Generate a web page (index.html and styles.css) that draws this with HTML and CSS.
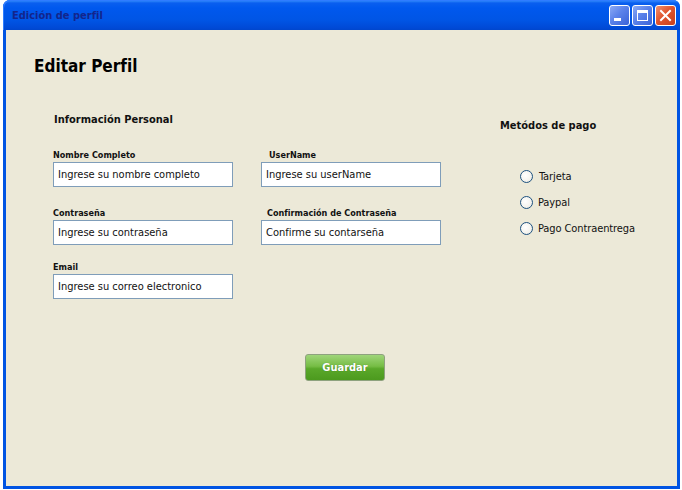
FILE: index.html
```html
<!DOCTYPE html>
<html lang="es">
<head>
<meta charset="utf-8">
<title>Edición de perfil</title>
<link rel="stylesheet" href="styles.css">
</head>
<body>
<div class="window">
  <div class="titlebar">
    <span class="title">Edición de perfil</span>
    <div class="controls">
      <span class="ctl ctl-min"><svg width="21" height="21" viewBox="0 0 21 21"><rect x="5" y="13" width="7" height="3" fill="#fff"/></svg></span>
      <span class="ctl ctl-max"><svg width="21" height="21" viewBox="0 0 21 21"><rect x="5.5" y="5.5" width="10" height="10" fill="none" stroke="#fff" stroke-width="1"/><rect x="5" y="5" width="11" height="3" fill="#fff"/></svg></span>
      <span class="ctl ctl-close"><svg width="21" height="21" viewBox="0 0 21 21"><path d="M6 6 L15 15 M15 6 L6 15" stroke="#fff" stroke-width="2" stroke-linecap="square"/></svg></span>
    </div>
  </div>
  <div class="content">
    <h1 class="page-title">Editar Perfil</h1>
    <div class="main">
      <section class="personal">
        <h2 class="section-title">Información Personal</h2>
        <div class="fields">
          <div class="field">
            <label class="label">Nombre Completo</label>
            <div class="input">Ingrese su nombre completo</div>
          </div>
          <div class="field">
            <label class="label label-right">UserName</label>
            <div class="input">Ingrese su userName</div>
          </div>
          <div class="field">
            <label class="label">Contraseña</label>
            <div class="input">Ingrese su contraseña</div>
          </div>
          <div class="field">
            <label class="label label-right2">Confirmación de Contraseña</label>
            <div class="input">Confirme su contarseña</div>
          </div>
          <div class="field field-tight">
            <label class="label">Email</label>
            <div class="input">Ingrese su correo electronico</div>
          </div>
        </div>
      </section>
      <section class="payment">
        <h2 class="section-title pay-title">Metódos de pago</h2>
        <div class="radios">
          <div class="radio-row"><span class="radio"></span><span class="radio-label r1">Tarjeta</span></div>
          <div class="radio-row"><span class="radio"></span><span class="radio-label">Paypal</span></div>
          <div class="radio-row"><span class="radio"></span><span class="radio-label">Pago Contraentrega</span></div>
        </div>
      </section>
    </div>
    <div class="actions">
      <button class="btn-save">Guardar</button>
    </div>
  </div>
</div>
</body>
</html>
```
FILE: styles.css
```css
html, body {
  margin: 0;
  padding: 0;
  background: #ffffff;
}
body {
  font-family: "DejaVu Sans Condensed", "DejaVu Sans", sans-serif;
  color: #000;
}
.window {
  margin-left: 3px;
  width: 677px;
  height: 489px;
  display: flex;
  flex-direction: column;
  background: #0054e3;
  border-radius: 7px 7px 0 0;
  box-sizing: border-box;
  padding: 0 3px 3px 3px;
}
.titlebar {
  height: 30px;
  margin: 0 -3px;
  padding: 0 4px 0 9px;
  display: flex;
  align-items: center;
  justify-content: space-between;
  border-radius: 7px 7px 0 0;
  background: linear-gradient(to bottom, #3d95ff 0px, #0a5fef 3px, #0058ee 8px, #0055e5 20px, #0049d6 28px, #0046cc 30px);
  box-shadow: inset 1px 1px 0 #2f7dff;
}
.title {
  font-size: 11px;
  font-weight: bold;
  color: #13258c;
  margin-top: 1px;
}
.controls {
  display: flex;
  gap: 2px;
  margin-top: 1px;
}
.ctl {
  width: 21px;
  height: 21px;
  box-sizing: border-box;
  border: 1px solid #fff;
  border-radius: 3px;
  display: block;
  position: relative;
}
.ctl svg {
  position: absolute;
  left: -1px;
  top: -1px;
}
.ctl-min, .ctl-max {
  background: linear-gradient(135deg, #8aa9f5 0%, #5b82ea 45%, #3a63d8 100%);
}
.ctl-close {
  background: linear-gradient(135deg, #f0916f 0%, #e0552f 45%, #c8401c 100%);
}
.content {
  flex: 1;
  background: #ece9d8;
  padding: 26px 0 0 28px;
}
.page-title {
  margin: 0;
  font-size: 17px;
  line-height: 20px;
  font-weight: bold;
}
.main {
  display: flex;
  margin-top: 37px;
  padding-left: 19px;
}
.personal {
  width: 388px;
}
.section-title {
  margin: 0 0 0 1px;
  font-size: 11px;
  line-height: 14px;
  font-weight: bold;
  color: #111;
}
.fields {
  margin-top: 22px;
  display: grid;
  grid-template-columns: 180px 180px;
  column-gap: 28px;
  row-gap: 20px;
}
.field {
  display: flex;
  flex-direction: column;
}
.field-tight {
  margin-top: -4px;
}
.label {
  font-size: 9px;
  line-height: 12px;
  font-weight: bold;
  margin-bottom: 1px;
  color: #111;
}
.label-right { padding-left: 8px; }
.label-right2 { padding-left: 6px; }
.input {
  height: 25px;
  box-sizing: border-box;
  border: 1px solid #7f9db9;
  background: #fff;
  font-size: 11px;
  line-height: 23px;
  padding-left: 4px;
  color: #111;
}
.payment {
  margin-left: 59px;
  padding-top: 6px;
}
.pay-title {
  margin-left: 0;
}
.radios {
  margin-top: 37px;
  margin-left: 20px;
  display: flex;
  flex-direction: column;
  gap: 13px;
}
.radio-row {
  display: flex;
  align-items: center;
  height: 13px;
}
.radio {
  width: 13px;
  height: 13px;
  box-sizing: border-box;
  border-radius: 50%;
  border: 1.5px solid #1c5180;
  background: radial-gradient(circle at 40% 40%, #ffffff 0%, #f4f3ee 60%, #dcdad0 100%);
}
.radio-label {
  font-size: 11px;
  margin-left: 5px;
  color: #111;
  letter-spacing: -0.1px;
}
.radio-label.r1 { margin-left: 6px; }
.actions {
  display: flex;
  justify-content: center;
  padding-left: 7px;
  margin-left: -28px;
  margin-top: 55px;
}
.btn-save {
  width: 80px;
  height: 27px;
  border: 1px solid #8ea27e;
  border-radius: 3px;
  background: linear-gradient(to bottom, #9fd57a 0%, #76bd45 45%, #5aa82a 55%, #4c9a1e 100%);
  color: #fff;
  font-family: "DejaVu Sans Condensed", "DejaVu Sans", sans-serif;
  font-size: 11px;
  font-weight: bold;
  text-shadow: 0 0 1px rgba(0,0,0,0.3);
  padding: 0;
}
```
